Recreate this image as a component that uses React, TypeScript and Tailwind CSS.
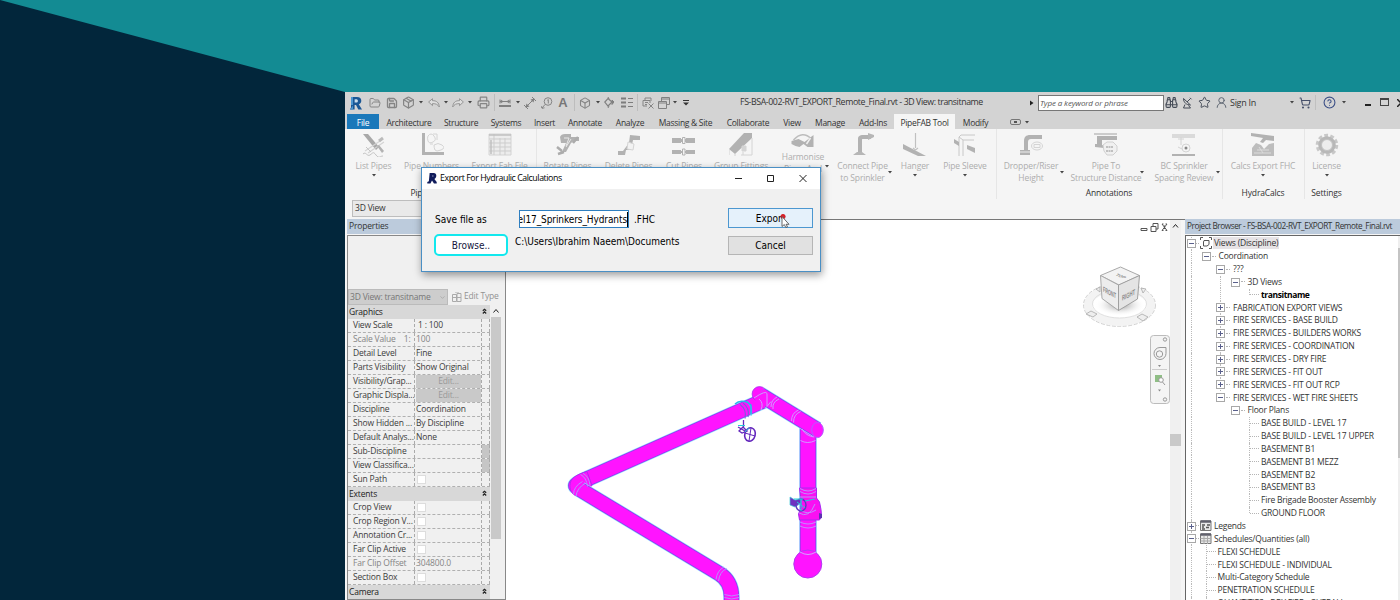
import React from "react";
import {
  Binoculars, Box, ChevronDown, CircleHelp, FolderOpen, Package,
  Printer, Save, ShoppingCart, Star, UserRound,
} from "lucide-react";

function Arrow({ className = "" }: { className?: string }) {
  return (
    <svg className={`shrink-0 ${className}`} width="4" height="3" viewBox="0 0 4 3">
      <path d="M0 0h4L2 2.6z" fill="#444" />
    </svg>
  );
}

function Cell({ w, children, className = "" }: { w: string; children?: React.ReactNode; className?: string }) {
  return <div className={`flex shrink-0 items-center justify-center ${w} ${className}`}>{children}</div>;
}

const ic = { size: 12, strokeWidth: 1.6, color: "#858585" };

function RevitLogo({ small = false }: { small?: boolean }) {
  return (
    <svg width={small ? 10 : 12} height={small ? 11 : 14} viewBox="0 0 12 14">
      {small ? (
        <>
          <path d="M3 0h5c2.500 0 3.500 1.500 3.500 3.500S10.300 7 9 7.500l3 4v2H8.500L6 9.500 4 13.500H0v-2l2-1z" fill="#101c5c" />
          <path d="M6.500 3v1.800h.6c.6 0 .9-.3.900-.9s-.3-.9-.9-.9z" fill="#9aa0c4" />
        </>
      ) : (
        <>
          <path d="M1 1h6c3 0 4.300 1.500 4.300 3.800 0 1.800-1 3-2.500 3.400L12 13.500H8.300L6 9H4.600v4.500H0l1-2z" fill="#1b5795" />
          <path d="M4.600 3.200v3.400h1.500c1.200 0 1.800-.7 1.800-1.700S7.300 3.200 6.100 3.200z" fill="#c9dcec" />
          <path d="M0 13.500l3-4v4zM1 1h2v8H1z" fill="#4c95d0" />
        </>
      )}
    </svg>
  );
}

function Bend({ flip = false }: { flip?: boolean }) {
  return (
    <svg className={flip ? "-scale-x-100" : ""} width="12" height="10" viewBox="0 0 12 10">
      <path d="M.6 4L4.500.7v2C8.500 2.500 11 4.500 11.300 9 9.500 6.300 8 5.600 4.500 5.600v2z" fill="#dedede" stroke="#8f8f8f" strokeWidth=".9" strokeLinejoin="round" />
    </svg>
  );
}

function TitleBar() {
  return (
    <div className="flex h-[21px] shrink-0 items-center bg-[#d3d3d3] pl-[2px] text-[#333]">
      <Cell w="w-[18px]"><RevitLogo /></Cell>
      <Cell w="w-[20px]"><FolderOpen {...ic} strokeWidth={2} /></Cell>
      <Cell w="w-[13px]"><Save {...ic} strokeWidth={2.600} /></Cell>
      <Cell w="w-[20px]"><Package {...ic} size={13} strokeWidth={2.200} /></Cell>
      <Cell w="w-[6px]"><Arrow /></Cell>
      <Cell w="w-[19px]"><Bend /></Cell>
      <Cell w="w-[6px]"><Arrow /></Cell>
      <Cell w="w-[18px]"><Bend flip /></Cell>
      <Cell w="w-[6px]"><Arrow /></Cell>
      <Cell w="w-[21px]"><Printer {...ic} size={13} strokeWidth={2.200} /></Cell>
      <Cell w="w-[20px]" className="h-[17px] border-l border-[#bdbdbd]">
        <svg width="12" height="10" viewBox="0 0 12 10" fill="none" stroke="#808080">
          <path d="M1 3.500h10M1 1.500v4M11 1.500v4" /><path d="M1 3.500l2-1.500v3zM11 3.500l-2-1.500v3z" fill="#808080" strokeWidth=".5" /><path d="M0 8h12" strokeWidth="2" />
        </svg>
      </Cell>
      <Cell w="w-[7px]"><Arrow /></Cell>
      <Cell w="w-[18px]">
        <svg width="12" height="12" viewBox="0 0 12 12" fill="none" stroke="#808080">
          <path d="M2 10L10 2M0 8l4 4M8 0l4 4" /><path d="M1.500 10.500l1-4 3 3zM10.500 1.500l-1 4-3-3z" fill="#808080" stroke="none" />
        </svg>
      </Cell>
      <Cell w="w-[16px]">
        <svg width="12" height="12" viewBox="0 0 12 12" fill="none" stroke="#858585">
          <circle cx="7" cy="4.500" r="3.800" /><path d="M7.300 2.500v4M6.300 3.300l1-.8M4 7.500L1 11M0 9l1 2.300 2.500-.5" />
        </svg>
      </Cell>
      <Cell w="w-[16px]" className="font-['Liberation_Sans',sans-serif] text-[13px] font-bold text-[#777]">A</Cell>
      <Cell w="w-[23px]" className="h-[17px]">
        <div className="mr-[4px] h-full w-px bg-[#bdbdbd]" /><Box {...ic} strokeWidth={2.200} />
      </Cell>
      <Cell w="w-[7px]"><Arrow /></Cell>
      <Cell w="w-[16px]">
        <svg width="10" height="11" viewBox="0 0 10 11" fill="none" stroke="#808080"><path d="M4 1.500L8 5 4 9 .8 5z" strokeWidth="1.200" /><path d="M4 0l1 2M4 11l1-2M8 3l2 2-2 2.500z" fill="#808080" /></svg>
      </Cell>
      <Cell w="w-[20px]">
        <svg width="12" height="11" viewBox="0 0 12 11" fill="none" stroke="#7d7d7d"><path d="M0 1.500h5M0 5.500h5M0 9.500h5" strokeWidth="2" /><path d="M7 1.500h5M7 5.500h5M7 9.500h5" /></svg>
      </Cell>
      <Cell w="w-[20px]" className="h-[17px] border-l border-[#bdbdbd]">
        <svg width="12" height="12" viewBox="0 0 12 12" fill="none" stroke="#858585">
          <path d="M3 3V1h6v3M1 9V3.500h7V6M1 9h4M3 5.500h3M3 7.500h2M6.500 6.500l5 5M11.500 6.500l-5 5" />
        </svg>
      </Cell>
      <Cell w="w-[14px]">
        <svg width="12" height="12" viewBox="0 0 12 12" fill="none" stroke="#808080">
          <path d="M3.500 4V.5h8v7H9M3.500 2h8" /><path d="M.5 4.500h8v7h-8zM.5 6h8" />
        </svg>
      </Cell>
      <Cell w="w-[8px]"><Arrow /></Cell>
      <Cell w="w-[14px]">
        <svg width="6" height="6" viewBox="0 0 6 6"><path d="M0 0h6v1H0zM0 2.500h6L3 5.500z" fill="#333" /></svg>
      </Cell>
      <div className="mt-px ml-[47px] w-[290px] shrink-0 whitespace-nowrap text-[8.800px] tracking-[-0.41px]">
        FS-BSA-002-RVT_EXPORT_Remote_Final.rvt - 3D View: transitname
      </div>
      <svg className="mr-[4px] shrink-0" width="4" height="6" viewBox="0 0 4 6"><path d="M0 .5v5L3.500 3z" fill="#222" /></svg>
      <div className="flex h-[16px] w-[126px] shrink-0 items-center border border-[#777] bg-white pl-[1px] text-[8px] italic tracking-[-0.12px] whitespace-nowrap text-[#555]">
        Type a keyword or phrase
      </div>
      <Cell w="w-[15px]"><Binoculars size={13} strokeWidth={2} color="#444b57" /></Cell>
      <Cell w="w-[17px]">
        <svg width="11" height="12" viewBox="0 0 11 12" fill="none" stroke="#444b57">
          <path d="M1.500 1.500c0 4 3 6.500 7 6.500zM5 5l3.500-3.500M3 7.500L1.500 11h7L6.500 8.500M8 .8l1.500 1.500" />
        </svg>
      </Cell>
      <Cell w="w-[17px]"><Star size={13} strokeWidth={1.800} color="#444b57" /></Cell>
      <Cell w="w-[17px]"><UserRound size={13} strokeWidth={1.800} color="#5c6470" /></Cell>
      <div className="w-[58px] shrink-0 text-[9px] tracking-[-0.3px]">Sign In</div>
      <Cell w="w-[7px]"><Arrow /></Cell>
      <Cell w="w-[20px]"><ShoppingCart size={12} strokeWidth={2.200} color="#46506a" /></Cell>
      <Cell w="w-[27px]" className="h-[15px] border-l border-[#c0c0c0]"><CircleHelp size={13} strokeWidth={2} color="#3b4f86" /></Cell>
      <Cell w="w-[6px]"><Arrow className="-ml-[2px]" /></Cell>
      <Cell w="w-[36px]"><div className="mt-[4px] ml-[3px] h-[2px] w-[6px] bg-[#222]" /></Cell>
      <div className="-mt-[2px] -ml-[4px] h-[8px] w-[9px] shrink-0 border border-t-2 border-[#444]" />
      <svg className="ml-[8px] shrink-0" width="8" height="8" viewBox="0 0 8 8"><path d="M0 0l8 8M8 0L0 8" stroke="#222" strokeWidth="1.500" /></svg>
    </div>
  );
}

const tabs: [string, string][] = [
  ["Architecture", "w-[58px] ml-px"], ["Structure", "w-[46px]"], ["Systems", "w-[44px]"], ["Insert", "w-[33px]"],
  ["Annotate", "w-[48px]"], ["Analyze", "w-[42px]"], ["Massing & Site", "w-[69px]"], ["Collaborate", "w-[56px]"],
  ["View", "w-[32px]"], ["Manage", "w-[44px]"], ["Add-Ins", "w-[42px]"], ["PipeFAB Tool", "w-[61px] bg-[#f5f5f5]"], ["Modify", "w-[41px]"],
];

function TabRow() {
  return (
    <div className="flex h-[16px] shrink-0 items-stretch bg-[#d3d3d3] pt-[1px] pl-[2px] text-[8.500px] tracking-[-0.3px] text-[#333]">
      <Cell w="w-[32px]" className="bg-[#1a78ba] pt-[3px] text-white">File</Cell>
      {tabs.map(([name, cls]) => (
        <div key={name} className={`flex shrink-0 items-center justify-center pt-[3px] whitespace-nowrap ${cls}`}>{name}</div>
      ))}
      <div className="ml-[14px] flex items-center gap-[4px] pt-px">
        <div className="flex h-[6px] w-[11px] items-center justify-center rounded-[2px] border border-[#777]"><div className="h-[2px] w-[3px] bg-[#555]" /></div>
        <Arrow />
      </div>
    </div>
  );
}

const D = "#b2b2b2";
const L = "#d4d4d4";
const glyphs: Record<string, React.ReactNode> = {
  list: <><path d="M1 1l5 0 11 13-3 3z" fill="#a8a8a8" /><path d="M3 18L21 6M6 20l16-11" stroke={L} strokeWidth="1.200" /><path d="M15 13l5 7 2-2-5-6z" fill={D} /><path d="M4 14l5 5M1 21c3-3 4 3 7 1s3-4 6 0 4 1 7 1" stroke="#c4c4c4" /><path d="M17 8l4-3" stroke="#bbb" strokeWidth="3" /></>,
  numbers: <><path d="M2 0h3v19h19v3H2z" fill={D} /><path d="M8 3q3-4 6 0t-1 6-5-1 0-5zM14 12q4-3 8 0t-1 5-6 0-1-5zM13 1h4v6M10 11h3" stroke={L} /></>,
  fab: <><path d="M1 1h22v21H1z" fill="#ececec" stroke={L} /><path d="M1 6h22M1 10h22M1 14h22M1 18h22M6 1v21M12 5v17M17 5v17" stroke="#cdcdcd" /><path d="M1 2h22M3 7v14" stroke="#c0c0c0" strokeWidth="1.500" /></>,
  rotate: <><path d="M4 4q1-3 5-3h6v3h8v4h-5l-3 2-5 9H6l4-9H5z" fill={D} /><path d="M1 14l5 4M17 10l5-6M2 21l6-2" stroke="#acacac" strokeWidth="2.500" /><path d="M8 5h5l-3 8M15 6l-5 8" stroke="#e8e8e8" /></>,
  remove: <><path d="M13 2l10 1v4h-7l-2 10H9l-1 5H1v-4h5l6-8z" fill={D} /><path d="M11 9l6 2-1 6-6-1z" fill="#f2f2f2" stroke={L} /></>,
  cut: <><path d="M0 5h9v5H0zM14 5h9v5h-9zM0 17h9v4H0zM14 17h9v4h-9zM9 6h5v3H9zM9 18h5v2H9z" fill={D} /><path d="M10.500 4.500h2.500v6h-2.500zM10.500 16h2.500v6h-2.500z" fill="#f5f5f5" stroke={D} /></>,
  group: <><path d="M0 16L15 0h8v5L6 21z" fill={D} /><path d="M0 16v6M6 21v2M23 5v17H12" stroke={L} /><path d="M13 13h4v5h-4zM14 19v3" fill={L} stroke={L} /></>,
  harmonise: <><path d="M2 7Q11-3 20 6" stroke="#bdbdbd" strokeWidth="1.500" /><path d="M0 8l7-2 6 3 9-7v12h-6l-4-3-4 3-4-1-4-2z" fill={D} /><path d="M15 11l4-6" stroke="#f0f0f0" strokeWidth="1.500" /></>,
  sprinkler: <><path d="M7 22V6c0-3 2-4 5-4h8v4h-8c-1 0-1 0-1 2v14z" fill={D} /><path d="M17 0v7l6-3v-2zM2 22h13l-4-3H6z" fill="#b6b6b6" /></>,
  hanger: <><path d="M0 11l23 12h-8L0 16z" fill={D} /><path d="M12.500 0v15M10 15l2.500 2 2.500-2" stroke="#c0c0c0" strokeWidth="1.200" /></>,
  sleeve: <><path d="M6 23V4l2-2h14M10 23V7h11M6 4l4 3" stroke="#c8c8c8" /><path d="M1 6l5 3v4l-5-3zM14 12l8 3v5l-8-4z" fill={D} /></>,
  dropper: <><path d="M1 22v-5h4V8c0-4 2-6 6-6h12v4H12c-2 0-3 1-3 3v8h2v5z" fill={D} /><path d="M1 19h11" stroke="#eee" /><ellipse cx="18" cy="13" rx="5.500" ry="4" stroke={L} /><path d="M15 11.500h6v3h-6z" stroke={L} /></>,
  structure: <><path d="M1 14v-3h2V3h20v4H8v5h2v3z" fill={D} /><path d="M0 1h23" stroke="#ccc" strokeWidth="2" /><path d="M9 12l4-3h6l4 4v5l-4 4h-6l-3-4z" fill="#f0f0f0" stroke="#d0d0d0" /><path d="M12 14h7M12 18h7" stroke="#c0c0c0" strokeWidth="2" strokeDasharray="2 .5" /></>,
  spacing: <><path d="M0 1h23v4H0z" fill="#dadada" /><path d="M0 21h23v2H0z" fill={D} /><path d="M9 4v8M6 6h6M6 14l4 2" stroke={L} /><circle cx="14" cy="15" r="4" stroke={L} /><circle cx="14" cy="15" r="1.500" fill="#888" /></>,
  calcs: <><path d="M0 0l23 3v5l-8-1-3 3-3-1 3-4L0 3z" fill={D} /><path d="M1 23v-8l4-5 5 2 3 4 5-5 5-1v13z" fill="#bdbdbd" /><path d="M6 17h12M8 14l4 6M3 20h17" stroke="#dcdcdc" /></>,
  gear: <><circle cx="12" cy="12" r="9.500" stroke="#c8c8c8" strokeWidth="3.500" strokeDasharray="3.700 2.270" /><circle cx="12" cy="12" r="7" stroke="#b8b8b8" strokeWidth="3.500" /><circle cx="12" cy="12" r="5.500" fill="#ededed" stroke="#c2c2c2" /></>,
};

type Item = { g: string; w: string; lines: string[]; arrow?: "below" | "side"; small?: boolean };
const groups: { title: string; pad: string; items: Item[] }[] = [
  { title: "Pipe Numbering", pad: "", items: [
    { g: "list", w: "w-[53px]", lines: ["List Pipes"], arrow: "below" },
    { g: "numbers", w: "w-[63px]", lines: ["Pipe Numbers"] },
    { g: "fab", w: "w-[73px]", lines: ["Export Fab File"] },
  ] },
  { title: "Pipe Tools", pad: "pr-[5px]", items: [
    { g: "rotate", w: "w-[63px]", lines: ["Rotate Pipes"] },
    { g: "remove", w: "w-[59px]", lines: ["Delete Pipes"] },
    { g: "cut", w: "w-[52px]", lines: ["Cut Pipes"] },
    { g: "group", w: "w-[62px]", lines: ["Group Fittings"] },
    { g: "harmonise", w: "w-[62px]", lines: ["Harmonise", "Pipes And"], arrow: "side", small: true },
    { g: "sprinkler", w: "w-[57px]", lines: ["Connect Pipe", "to Sprinkler"], arrow: "side" },
    { g: "hanger", w: "w-[48px]", lines: ["Hanger"], arrow: "below" },
    { g: "sleeve", w: "w-[52px]", lines: ["Pipe Sleeve"], arrow: "below" },
  ] },
  { title: "Annotations", pad: "", items: [
    { g: "dropper", w: "w-[70px]", lines: ["Dropper/Riser", "Height"], arrow: "side" },
    { g: "structure", w: "w-[80px]", lines: ["Pipe To", "Structure Distance"], arrow: "side" },
    { g: "spacing", w: "w-[76px]", lines: ["BC Sprinkler", "Spacing Review"], arrow: "side" },
  ] },
  { title: "HydraCalcs", pad: "", items: [{ g: "calcs", w: "w-[82px]", lines: ["Calcs Export FHC"], arrow: "below" }] },
  { title: "Settings", pad: "", items: [{ g: "gear", w: "w-[45px]", lines: ["License"], arrow: "below" }] },
];

function RibbonItem({ item }: { item: Item }) {
  return (
    <div className={`relative flex shrink-0 flex-col items-center pt-[4px] ${item.w}`}>
      <svg width="24" height={item.small ? 15 : 24} viewBox={item.small ? "0 0 23 15" : "0 0 24 24"} fill="none">{glyphs[item.g]}</svg>
      <div className={`flex flex-col items-center text-[8.500px] leading-[11.500px] tracking-[-0.13px] whitespace-nowrap text-[#adadad] ${item.small ? "pt-[3px]" : "pt-[3px]"}`}>
        {item.lines.map((l) => <span key={l}>{l}</span>)}
      </div>
      {item.arrow === "below" && <Arrow className="mt-[2px]" />}
      {item.arrow === "side" && <Arrow className={`absolute ${item.small ? "top-[36px] right-[5px]" : item.g === "sprinkler" ? "top-[42px] -right-px" : "top-[42px] right-[2px]"}`} />}
    </div>
  );
}

function Ribbon() {
  return (
    <div className="flex h-[70px] shrink-0 bg-[#f5f5f5] pl-[2px]">
      {groups.map((g, i) => (
        <div key={g.title} className={`flex shrink-0 flex-col ${g.pad} ${i < 4 ? "shadow-[1px_0_0_#e6e6e6]" : ""}`}>
          <div className="flex h-[58px]">{g.items.map((it) => <RibbonItem key={it.g} item={it} />)}</div>
          <div className="text-center text-[8.500px] leading-[12px] tracking-[-0.15px] text-[#333]">{g.title}</div>
        </div>
      ))}
    </div>
  );
}

const props: [string, string, string?][] = [
  ["Graphics", "", "head"], ["View Scale", " 1 : 100"], ["Scale Value    1:", "100", "dim"], ["Detail Level", "Fine"],
  ["Parts Visibility", "Show Original"], ["Visibility/Grap...", "Edit...", "edit"], ["Graphic Displa...", "Edit...", "edit"],
  ["Discipline", "Coordination"], ["Show Hidden ...", "By Discipline"], ["Default Analys...", "None"],
  ["Sub-Discipline", "", "more"], ["View Classifica...", "", "more"], ["Sun Path", "", "check"], ["Extents", "", "head"],
  ["Crop View", "", "check"], ["Crop Region V...", "", "check"], ["Annotation Cr...", "", "check"], ["Far Clip Active", "", "check"],
  ["Far Clip Offset", "304800.0", "dim"], ["Section Box", "", "check"], ["Camera", "", "head"],
];

function PropertyRow({ name, value, kind }: { name: string; value: string; kind?: string }) {
  if (kind === "head")
    return (
      <div className="flex h-[14px] shrink-0 items-center justify-between bg-[#d8d8d8] pr-[3px] pl-[1px] text-[#222]">
        {name}
        <svg className="-mt-[3px]" width="5" height="6" viewBox="0 0 5 6" fill="none" stroke="#222"><path d="M.8 2.800l1.700-1.600 1.700 1.600M.8 5.500l1.700-1.600 1.700 1.600" strokeWidth="1.200" /></svg>
      </div>
    );
  return (
    <div className={`flex h-[14px] shrink-0 border-b border-dashed border-[#b0b0b0] whitespace-pre ${kind === "dim" ? "text-[#858585]" : "text-[#3c3c3c]"}`}>
      <div className="flex w-[67px] shrink-0 items-center border-r border-dashed border-[#aaa] pl-[5px]">{name}</div>
      <div className="flex w-[67px] items-center border-r border-dashed border-[#aaa] pl-[1px]">
        {kind === "edit" ? <div className="flex h-full w-full items-center justify-center bg-[#c9c9c9] text-[#999]">{value}</div>
          : kind === "check" ? <div className="ml-[1px] h-[9px] w-[9px] border border-[#ddd] bg-white" /> : value}
      </div>
      <div className={`w-[8px] border-r border-dashed border-[#aaa] ${kind === "more" ? "bg-[#c6c6c6]" : ""}`} />
    </div>
  );
}

function PropertiesPanel() {
  return (
    <div className="flex w-[161px] shrink-0 flex-col pl-[2px] text-[8.500px] tracking-[-0.17px]">
      <div className="flex h-[15px] shrink-0 items-center bg-[#bccbdc] pl-[2px] text-[#333]">Properties</div>
      <div className="mt-[1px] flex min-h-0 flex-1 flex-col overflow-hidden border border-[#888] bg-[#f0f0f0]">
        <div className="mt-[53px] flex h-[16px] shrink-0 items-center">
          <div className="flex h-full w-[100px] items-center justify-between border border-[#bbb] bg-[#cdcdcd] px-[1px] text-[#777] tracking-[-0.2px] whitespace-nowrap">
            3D View: transitname<ChevronDown size={7} color="#999" />
          </div>
          <svg className="ml-[4px]" width="10" height="10" viewBox="0 0 10 10" fill="none" stroke="#aaa">
            <path d="M.5 2.500h4v7h-4zM5 1.500h4v8H5zM.5 5.500H9M3 0h4" />
          </svg>
          <span className="-mt-px ml-[2px] whitespace-nowrap text-[#929292]">Edit Type</span>
        </div>
        <div className="flex min-h-0 flex-1">
          <div className="flex w-[142px] flex-col">
            {props.map(([n, v, k], i) => <PropertyRow key={i} name={n} value={v} kind={k} />)}
          </div>
          <div className="ml-px flex w-[10px] flex-col items-center">
            <svg className="my-[3px] shrink-0" width="6" height="6" viewBox="0 0 6 6" fill="none" stroke="#222"><path d="M.5 4.500L3 1.500l2.500 3" /></svg>
            <div className="h-[222px] w-full shrink-0 bg-[#c9c9c9]" />
          </div>
        </div>
      </div>
    </div>
  );
}

function Pipe({ d, w = 15 }: { d: string; w?: number }) {
  return (
    <g fill="none" strokeLinejoin="round">
      <path d={d} stroke="#9be8ff" strokeWidth={w + 1.600} />
      <path d={d} stroke="#8f3cf0" strokeWidth={w + 0.400} />
      <path d={d} stroke="#ff14ff" strokeWidth={w - 1.300} />
    </g>
  );
}

function ModelView() {
  return (
    <svg className="block h-full w-full" viewBox="506 220 664 380" preserveAspectRatio="xMinYMin slice" fill="none">
      <Pipe d="M577 486Q572 486 587 479L765 400" />
      <path d="M587 471.500c-11 3-17 7-17 14 0 6 3 10 8 11l14-11z" fill="#ff14ff" stroke="#a52cf0" strokeWidth=".8" />
      <Pipe d="M580 489.500L719 573.500Q731.500 581 731.500 597V604" />
      <path d="M580.500 474.500q6 3 7 12M583 473.300q6 3 7 12M573.500 494.500q0-8 9-13M576 496q1-8 9-12.500M718.500 581q1-9 8-12.500M716 579.500q1-9 8-12.500M724.500 594.500q7 3 14.500 0M724.500 597.500q7 3 14.500 0" stroke="#b98cff" />
      <Pipe d="M808 428V553" w={16} />
      <circle cx="759.500" cy="394" r="7.400" fill="#ff14ff" stroke="#a52cf0" strokeWidth=".8" />
      <Pipe d="M760 394.500L817 429.500" />
      <path d="M755 396l10-3v14l-9 2z" fill="#ff14ff" />
      <ellipse cx="817.500" cy="430" rx="5.800" ry="7.600" fill="#ff14ff" stroke="#b45cff" />
      <path d="M754 398q12-8 13-4.500v13l4-5M759 399q5 4 2 11M773 409q-1-7 6-10M771 407q0-7 6-10M791.500 421q0-8 7-11M793.500 422.500q0-8 7-11M802 429q4 7 12 8M800.500 440.500q7 4 15 0" stroke="#cf9cff" />
      <path d="M740 404.500q7 5 5 14M743 403q7 5 5 14" stroke="#8458e0" strokeWidth="1.200" />
      <path d="M747 401.500q6 5 4 14" stroke="#4ccff0" strokeWidth="1.500" />
      <path d="M735 404c3-3 8-3.500 13-1.500M747 402l4 3v9" stroke="#2ab5e6" strokeWidth="1.500" />
      <g stroke="#6428bd">
        <path d="M743.500 420v8M738 427l7 4M739 431l4-4 4 4-5 2z" strokeWidth="1.300" />
        <ellipse cx="750" cy="434.500" rx="5.200" ry="6.800" strokeWidth="1.600" transform="rotate(15 750 434.500)" />
        <path d="M745 433l10 3M751 428l-2 13" />
      </g>
      <path d="M738 425.500h7M745 432l4-4.500" stroke="#25ccd8" />
      <path d="M799.500 488h17v10l3 4q2 8 2 14l-2 4h-20l-1-6 3-8z" fill="#fa10f2" stroke="#a52cf0" />
      <path d="M800 488.500q8 5 16 0M800 491.500q8 5 16 0M800 497h16M799 509q8 7 17 1M799 513q10 6 16-9M800 522q8 4 16 0M800 526q8 4 16 0" stroke="#c08cff" />
      <path d="M790 497v8l5 2 6-4v-4l-6 1z" fill="#702ec0" stroke="#3cc8d8" strokeWidth=".7" />
      <ellipse cx="801" cy="505" rx="5" ry="6" stroke="#5f39c0" strokeWidth="1.400" />
      <path d="M797 502l8 6M801 499v12M794 499h9M805 501l10-2" stroke="#28ccd9" />
      <path d="M819 513l3 1v4l-3 1z" fill="#5c32b0" />
      <circle cx="807.800" cy="564" r="14" fill="#ff14ff" stroke="#b13af2" />
      <path d="M800 552q8 5 16 0" stroke="#d0a4ff" />

      <defs><radialGradient id="cubeShade"><stop offset=".2" stopColor="#999" stopOpacity=".7" /><stop offset="1" stopColor="#fff" stopOpacity="0" /></radialGradient></defs>
      <ellipse cx="1119.500" cy="305" rx="31.500" ry="17" stroke="#f3f3f3" strokeWidth="8" />
      <ellipse cx="1119.500" cy="305" rx="36" ry="21.500" stroke="#c6c6c6" strokeDasharray="4 1.500" strokeWidth=".8" />
      <ellipse cx="1119.500" cy="304" rx="27" ry="14" stroke="#d8d8d8" strokeWidth=".8" />
      <ellipse cx="1120" cy="305" rx="25" ry="11" fill="url(#cubeShade)" />
      <path d="M1100.500 275.500l20-8.500 19 8.500-20.500 9.500z" fill="#f3f3f3" stroke="#a9a9a9" />
      <path d="M1100.500 275.500l18 9.500v25.500l-16.500-12z" fill="#ededed" stroke="#a9a9a9" />
      <path d="M1118.500 285l21-9.500-2 23.500-19 11.500z" fill="#e4e4e4" stroke="#a0a0a0" />
      <g fill="#8a8a8a" fontFamily="Liberation Sans, sans-serif" fontWeight="bold" fontSize="5" textAnchor="middle">
        <text transform="matrix(.75 .42 0 1.500 1109.500 295)">FRONT</text>
        <text transform="matrix(.85 -.42 0 1.500 1128.500 297.500)">RIGHT</text>
        <text transform="matrix(.9 .35 -.8 .5 1119.500 277)">TOP</text>
      </g>
      <g stroke="#aaa" fill="#eee" strokeWidth=".8">
        <path d="M1096 289l4-2v5zM1141 288l5 1-3 4zM1086 314l5-3 6 3-4 3zM1137 317l5-3 6 3-5 4z" />
      </g>
      <rect x="1150.500" y="335.500" width="19" height="68" rx="3" fill="#f4f4f4" stroke="#bcbcbc" />
      <g stroke="#999"><circle cx="1165" cy="339.500" r="1.700" /><circle cx="1165" cy="399.500" r="1.700" /><path d="M1160 347.500h6v6a6 6 0 1 1-6-6z" /><circle cx="1159.500" cy="354" r="3.200" /></g>
      <path d="M1152 369.500h15" stroke="#ccc" /><path d="M1158 365h3l-1.500 2zM1158 389.500h3l-1.500 2z" fill="#888" />
      <path d="M1155 375h7v7h-7z" fill="#8fbe85" /><circle cx="1161" cy="380" r="2.300" fill="#fff" stroke="#999" /><path d="M1162.500 382l2.500 3" stroke="#999" />
    </svg>
  );
}

type Node = { t: string; l: number; box?: "+" | "-"; guides?: number[]; kind?: "root" | "legend" | "schedule"; bold?: boolean; end?: boolean };
const tree: Node[] = [
  { t: "Views (Discipline)", l: 0, box: "-", kind: "root" },
  { t: "Coordination", l: 1, box: "-" },
  { t: "???", l: 2, box: "-" },
  { t: "3D Views", l: 3, box: "-", guides: [2] },
  { t: "transitname", l: 4, bold: true, guides: [2], end: true },
  ...["FABRICATION EXPORT VIEWS", "FIRE SERVICES - BASE BUILD", "FIRE SERVICES - BUILDERS WORKS", "FIRE SERVICES - COORDINATION", "FIRE SERVICES - DRY FIRE", "FIRE SERVICES - FIT OUT", "FIRE SERVICES - FIT OUT RCP"].map(
    (t): Node => ({ t, l: 2, box: "+", guides: [2] }),
  ),
  { t: "FIRE SERVICES - WET FIRE SHEETS", l: 2, box: "-" },
  { t: "Floor Plans", l: 3, box: "-" },
  ...["BASE BUILD - LEVEL 17", "BASE BUILD - LEVEL 17 UPPER", "BASEMENT B1", "BASEMENT B1 MEZZ", "BASEMENT B2", "BASEMENT B3", "Fire Brigade Booster Assembly"].map(
    (t): Node => ({ t, l: 4, guides: [4] }),
  ),
  { t: "GROUND FLOOR", l: 4, end: true },
  { t: "Legends", l: 0, box: "+", kind: "legend" },
  { t: "Schedules/Quantities (all)", l: 0, box: "-", kind: "schedule" },
  ...["FLEXI SCHEDULE", "FLEXI SCHEDULE - INDIVIDUAL", "Multi-Category Schedule", "PENETRATION SCHEDULE", "QUANTITIES - DRY FIRE - OVERALL"].map(
    (t): Node => ({ t, l: 1, guides: [1] }),
  ),
];

function NodeIcon({ kind }: { kind: string }) {
  if (kind === "root")
    return (
      <svg width="12" height="12" viewBox="0 0 12 12" fill="none" stroke="#555">
        <path d="M.5 3V.5H3M9 .5h2.500V3M11.500 9v2.500H9M3 11.500H.5V9M4 3.500h5v4L7 9H3.500V5z" />
      </svg>
    );
  return (
    <svg width="12" height="11" viewBox="0 0 12 11" fill="none" stroke="#777">
      <path d="M.5 1h10.500v9.500H.5z" fill="#e8e8e8" /><path d="M.5 1.500h10.500" strokeWidth="2.500" stroke="#60606c" />
      {kind === "legend" ? <path d="M2 5h3M2 7h2M7 5h3M6 7.500h3M2 9h3" stroke="#555" strokeWidth="1.300" /> : <path d="M.5 5.500H11M.5 8H11M4 3v8M7.500 3v8" stroke="#aaa" />}
    </svg>
  );
}

function TreeRow({ n }: { n: Node }) {
  const guides = n.guides ?? [];
  return (
    <div className="flex h-[12.850px] shrink-0 items-center">
      {Array.from({ length: n.l + 1 }, (_, i) => (
        <div key={i} className={`relative flex h-full shrink-0 items-center ${i === n.l ? "w-[9px]" : "w-[14.500px]"}`}>
          {(i === 0 || guides.includes(i)) && <div className="ml-[4px] h-full border-l border-dotted border-[#bbb]" />}
          {i === n.l && n.end && <div className="mb-[6px] ml-[4px] h-1/2 border-l border-dotted border-[#bbb]" />}
          {i === n.l && n.box && (
            <div className="absolute top-[2px] left-0 flex h-[9px] w-[9px] items-center justify-center border border-[#a8a8a8] bg-white">
              <div className="absolute top-[3px] left-px h-px w-[5px] bg-[#5a608c]" />
              {n.box === "+" && <div className="absolute top-px left-[3px] h-[5px] w-px bg-[#5a608c]" />}
            </div>
          )}
        </div>
      ))}
      <div className={`shrink-0 border-t border-dotted border-[#b5b5b5] ${n.kind ? "w-[3px]" : n.box ? "mx-[1px] w-[4px]" : "-ml-[4px] w-[9px]"}`} />
      {n.kind && <div className="w-[14px] pl-px"><NodeIcon kind={n.kind} /></div>}
      <div className={`leading-[12px] whitespace-nowrap ${n.kind === "root" ? "bg-[#e6e3e6] px-[1px]" : n.kind ? "pl-[1px]" : "ml-[2px]"} ${n.bold ? "font-bold tracking-[-0.4px] text-black" : "text-[#333]"}`}>{n.t}</div>
    </div>
  );
}

function ProjectBrowser() {
  return (
    <div className="flex w-[215px] shrink-0 flex-col text-[8.500px] tracking-[-0.2px]">
      <div className="flex h-[15px] shrink-0 items-center bg-[#bccbdc] pl-[2px] text-[8.200px] tracking-[-0.42px] whitespace-nowrap text-[#333]">
        Project Browser - FS-BSA-002-RVT_EXPORT_Remote_Final.rvt
      </div>
      <div className="mt-[1px] flex min-h-0 flex-1 justify-between overflow-hidden border-t border-l border-[#666] bg-white">
        <div className="flex flex-col pt-px pl-[1px]">{tree.map((n, i) => <TreeRow key={i} n={n} />)}</div>
        <div className="w-[2px] bg-[#eee] pt-[12px]"><div className="h-[210px] bg-[#c4c4c4]" /></div>
      </div>
    </div>
  );
}

function ExportDialog() {
  return (
    <div className="absolute top-[75px] left-[76px] flex h-[105px] w-[400px] flex-col border border-[#4a8fc4] bg-[#f0f0f0] text-black shadow-[1px_3px_8px_rgba(0,0,0,0.4)]">
      <div className="flex h-[21px] shrink-0 items-center bg-white pl-[5px]">
        <RevitLogo small />
        <span className="ml-[3px] flex-1 pt-px text-[8.800px] tracking-[-0.42px]">Export For Hydraulic Calculations</span>
        <svg className="mr-[13px]" width="72" height="9" viewBox="0 0 72 9" fill="none" stroke="#222">
          <path d="M0 4.500h7M32.500 1.500h6v6h-6zM64.500 1l7 7M71.500 1l-7 7" />
        </svg>
      </div>
      <div className="flex flex-1 font-['DejaVu_Sans_Condensed','DejaVu_Sans',sans-serif] text-[10px]">
        <div className="flex flex-col pt-[20px] pl-[12px]">
          <div className="flex h-[20px] items-center">
            <span className="w-[85px] pl-[1px]">Save file as</span>
            <div className="flex h-[18px] w-[110px] items-center justify-end overflow-hidden border border-[#2f7fc0] bg-white tracking-[-0.09px] whitespace-nowrap">
              <span className="border-r border-black">el17_Sprinkers_Hydrants</span>
            </div>
            <span className="ml-[5px]">.FHC</span>
          </div>
          <div className="mt-[4px] flex">
            <button className="mt-[1px] flex h-[22px] w-[74px] items-center justify-center rounded-[5px] border-2 border-[#12e8ee] bg-white text-[#15153c]">Browse..</button>
            <span className="mt-px ml-[7px] whitespace-nowrap">C:\Users\Ibrahim Naeem\Documents</span>
          </div>
        </div>
        <div className="mr-[7px] ml-auto flex flex-col gap-[8px] pt-[19px]">
          <button className="relative flex h-[20px] w-[85px] items-center justify-center border border-[#4c97d0] bg-[#e5f1fb]">
            Export
            <svg className="absolute top-[4px] left-[50px]" width="12" height="16" viewBox="0 0 12 16">
              <circle cx="4" cy="3.500" r="2.500" fill="#d82028" /><path d="M3 3.500v10l2.300-2 1.500 3 1.700-.8L7 11.300h3z" fill="#fff" stroke="#444" strokeWidth=".8" />
            </svg>
          </button>
          <button className="flex h-[19px] w-[85px] items-center justify-center border border-[#b5b5b5] bg-[#e1e1e1]">Cancel</button>
        </div>
      </div>
    </div>
  );
}

export default function App() {
  return (
    <div className="flex h-[600px] w-[1400px] overflow-hidden bg-[#138b93] font-['Open_Sans',sans-serif]">
      <div className="w-[345px] shrink-0 bg-[#02263b] [clip-path:polygon(0_0,100%_92px,100%_100%,0_100%)]" />
      <div className="relative mt-[92px] flex w-[1055px] flex-col overflow-hidden bg-[#f5f5f5]">
        <TitleBar />
        <TabRow />
        <Ribbon />
        <div className="flex h-[20px] shrink-0 pt-[1px] pl-[7px]">
          <div className="flex h-[17px] w-[120px] items-center border border-[#bdbdbd] bg-[#e9e9e9] pl-[2px] text-[8.500px] tracking-[-0.2px] text-[#333]">3D View</div>
        </div>
        <div className="flex min-h-0 flex-1">
          <PropertiesPanel />
          <div className="flex min-w-0 flex-1 border-t border-[#777] bg-white">
            <div className="relative w-[664px] shrink-0">
              <ModelView />
              <svg className="absolute top-[3px] right-[2px]" width="28" height="9" viewBox="0 0 28 9" fill="none" stroke="#555">
                <path d="M1 5.500h6v2H1zM11 3.500h5v5h-5zM13 3V.5h5V6h-2M22 1l5 6.500M27 1l-5 6.500" /><path d="M24.500 2.500v3.500M22 1h1.500M25.500 1H27M22 7.500h1.500M25.500 7.500H27" />
              </svg>
            </div>
            <div className="flex w-[11px] flex-col items-center bg-[#f0f0f0]">
              <svg className="mt-[3px]" width="7" height="6" viewBox="0 0 7 6" fill="none" stroke="#222"><path d="M1 4.500l2.500-3L6 4.500" /></svg>
              <div className="mt-[205px] h-[12px] w-full bg-[#c9c9c9]" />
            </div>
            <div className="w-[4px] bg-[#f5f5f5]" />
          </div>
          <ProjectBrowser />
        </div>
        <ExportDialog />
      </div>
    </div>
  );
}
